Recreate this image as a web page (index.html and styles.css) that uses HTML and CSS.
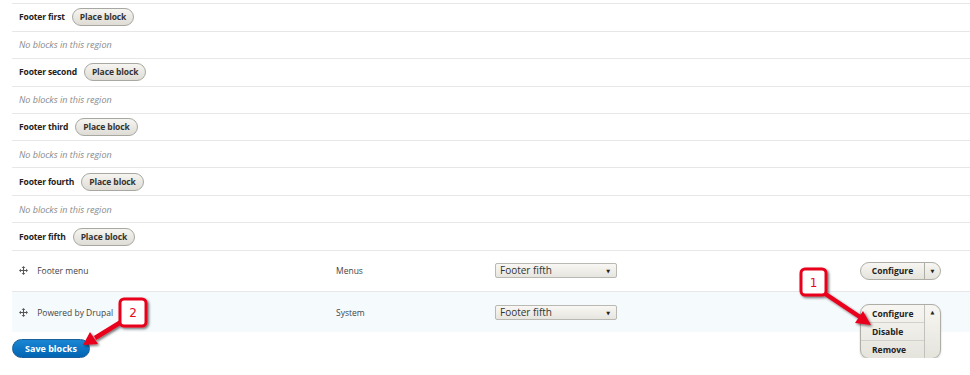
FILE: index.html
```html
<!DOCTYPE html>
<html lang="en">
  <head>
    <meta charset="UTF-8" />
    <title>Block layout</title>
    <link rel="stylesheet" href="styles.css">
  </head>
  <body>
    <div class="page">
      <table class="blocks">
        <colgroup>
          <col class="col-name" />
          <col class="col-cat" />
          <col class="col-region" />
          <col class="col-ops" />
        </colgroup>
        <tbody>
          <tr class="region-title">
            <td colspan="4"><span class="region-name">Footer first</span><a class="btn-small">Place block</a></td>
          </tr>
          <tr class="region-empty">
            <td colspan="4">No blocks in this region</td>
          </tr>
          <tr class="region-title">
            <td colspan="4"><span class="region-name">Footer second</span><a class="btn-small">Place block</a></td>
          </tr>
          <tr class="region-empty">
            <td colspan="4">No blocks in this region</td>
          </tr>
          <tr class="region-title">
            <td colspan="4"><span class="region-name">Footer third</span><a class="btn-small">Place block</a></td>
          </tr>
          <tr class="region-empty">
            <td colspan="4">No blocks in this region</td>
          </tr>
          <tr class="region-title">
            <td colspan="4"><span class="region-name">Footer fourth</span><a class="btn-small">Place block</a></td>
          </tr>
          <tr class="region-empty">
            <td colspan="4">No blocks in this region</td>
          </tr>
          <tr class="region-title">
            <td colspan="4"><span class="region-name">Footer fifth</span><a class="btn-small">Place block</a></td>
          </tr>

          <tr class="block-row">
            <td class="block-name">
              <svg class="drag" viewBox="0 0 10 10" width="9" height="9">
                <path d="M5 0 L7 2.2 H5.6 V4.4 H7.8 V3 L10 5 L7.8 7 V5.6 H5.6 V7.8 H7 L5 10 L3 7.8 H4.4 V5.6 H2.2 V7 L0 5 L2.2 3 V4.4 H4.4 V2.2 H3 Z" fill="#555"/>
              </svg>
              Footer menu
            </td>
            <td>Menus</td>
            <td>
              <div class="select">Footer fifth<span class="caret">&#9660;</span></div>
            </td>
            <td class="ops">
              <div class="dropbutton">
                <span class="drop-main">Configure</span>
                <span class="drop-toggle">&#9660;</span>
              </div>
            </td>
          </tr>
          <tr class="block-row active">
            <td class="block-name">
              <svg class="drag" viewBox="0 0 10 10" width="9" height="9">
                <path d="M5 0 L7 2.2 H5.6 V4.4 H7.8 V3 L10 5 L7.8 7 V5.6 H5.6 V7.8 H7 L5 10 L3 7.8 H4.4 V5.6 H2.2 V7 L0 5 L2.2 3 V4.4 H4.4 V2.2 H3 Z" fill="#555"/>
              </svg>
              Powered by Drupal
            </td>
            <td>System</td>
            <td>
              <div class="select">Footer fifth<span class="caret">&#9660;</span></div>
            </td>
            <td class="ops">
              <div class="dropbutton-slot">
                <div class="dropbutton open">
                  <ul class="drop-list">
                    <li>Configure</li>
                    <li>Disable</li>
                    <li>Remove</li>
                  </ul>
                  <span class="drop-toggle">&#9650;</span>
                </div>
              </div>
            </td>
          </tr>
        </tbody>
      </table>

      <button class="save">Save blocks</button>
    </div>

    <!-- annotation callouts drawn over the screenshot -->
    <svg class="callouts" width="970" height="375" viewBox="0 0 970 375">
      <defs>
        <filter id="shadow" x="-30%" y="-30%" width="160%" height="160%">
          <feDropShadow dx="1.5" dy="1.5" stdDeviation="1" flood-color="#000" flood-opacity="0.55"/>
        </filter>
      </defs>
      <g filter="url(#shadow)">
        <line x1="824" y1="293" x2="860" y2="317" stroke="#e8061b" stroke-width="4.5"/>
        <polygon points="871,325 855,323 863,311" fill="#e8061b"/>
        <rect x="801" y="269" width="25" height="26" rx="4" fill="#fff" stroke="#e8061b" stroke-width="3"/>

        <line x1="121" y1="322" x2="95" y2="338" stroke="#e8061b" stroke-width="4.5"/>
        <polygon points="83,345 90,332 98,344" fill="#e8061b"/>
        <rect x="120" y="299" width="26" height="27" rx="4" fill="#fff" stroke="#e8061b" stroke-width="3"/>
      </g>
      <text x="813.5" y="287" class="callout-num">1</text>
      <text x="133" y="317" class="callout-num">2</text>
    </svg>
  </body>
</html>
```

FILE: styles.css
```css
* {
  margin: 0;
  padding: 0;
  box-sizing: border-box;
}

body {
  background-color: white;
  font-family: "Open Sans", "DejaVu Sans", sans-serif;
  font-size: 9px;
  color: #333;
  overflow: hidden;
}

.page {
  position: relative;
  padding: 3px 0 0 12px;
}

.blocks {
  width: 958px;
  table-layout: fixed;
  border-collapse: collapse;
}

.col-name {
  width: 317px;
}
.col-cat {
  width: 159px;
}
.col-region {
  width: 365px;
}
.col-ops {
  width: 117px;
}

.blocks td {
  padding: 0 7px;
  border-top: 1px solid #e7e7e7;
  vertical-align: middle;
}

.region-title td {
  height: 27.8px;
}

.region-name {
  font-size: 8.5px;
  font-weight: bold;
  letter-spacing: -0.15px;
  color: #222;
  margin-right: 7px;
}

.btn-small {
  display: inline-block;
  padding: 2px 7px;
  border: 1px solid #a8a8a2;
  border-radius: 9px;
  background-image: linear-gradient(#f6f5f1, #dedcd5);
  font-size: 8.5px;
  font-weight: bold;
  letter-spacing: -0.1px;
  color: #333;
  line-height: 12px;
}

.region-empty td {
  height: 27px;
  font-style: italic;
  color: #8a8a8a;
}

.block-row td {
  height: 41px;
  color: #444;
  font-size: 8.5px;
}

.block-row.active td {
  background-color: #f5fafd;
}

.drag {
  margin: 0 7px 0 0;
  vertical-align: -1px;
}

.select {
  position: relative;
  width: 122px;
  height: 15px;
  padding-left: 4px;
  border: 1px solid #b9b8b2;
  border-radius: 2px;
  background-image: linear-gradient(#f8f7f3, #e6e5de);
  line-height: 13px;
  color: #333;
  font-size: 10px;
}

.caret {
  position: absolute;
  right: 6px;
  top: 0;
  font-size: 5px;
  line-height: 14px;
  color: #222;
}

.dropbutton {
  display: flex;
  width: 81px;
  height: 18px;
  border: 1px solid #aeada6;
  border-radius: 9px;
  background-image: linear-gradient(#f7f6f2, #e4e3dc);
  font-weight: bold;
  color: #222;
  line-height: 16px;
  overflow: hidden;
}

.drop-main {
  flex: 1;
  text-align: center;
  border-right: 1px solid #aeada6;
}

.drop-toggle {
  width: 15px;
  text-align: center;
  font-size: 5px;
  color: #222;
}

.dropbutton-slot {
  position: relative;
  height: 18px;
  top: 1px;
}

.dropbutton.open {
  position: absolute;
  left: 0;
  top: 0;
  height: 55px;
  box-shadow: 0 1px 2px rgba(0, 0, 0, 0.2);
}

.drop-list {
  list-style: none;
  flex: 1;
  border-right: 1px solid #c2c1ba;
}

.drop-list li {
  height: 18px;
  padding-left: 11px;
  line-height: 17px;
  border-bottom: 1px solid #d2d1ca;
}

.drop-list li:last-child {
  border-bottom: none;
}

.dropbutton.open .drop-toggle {
  line-height: 15px;
}

.save {
  margin-top: 7px;
  padding: 0 12px;
  height: 19px;
  border: 1px solid #1a5f99;
  border-radius: 10px;
  background-image: linear-gradient(#1a87d4, #0064b3);
  color: white;
  font-family: inherit;
  font-size: 9px;
  font-weight: bold;
}

.callouts {
  position: absolute;
  left: 0;
  top: 0;
  pointer-events: none;
}

.callout-num {
  font-family: "DejaVu Sans", sans-serif;
  font-size: 12px;
  fill: #e8061b;
  text-anchor: middle;
}
```
